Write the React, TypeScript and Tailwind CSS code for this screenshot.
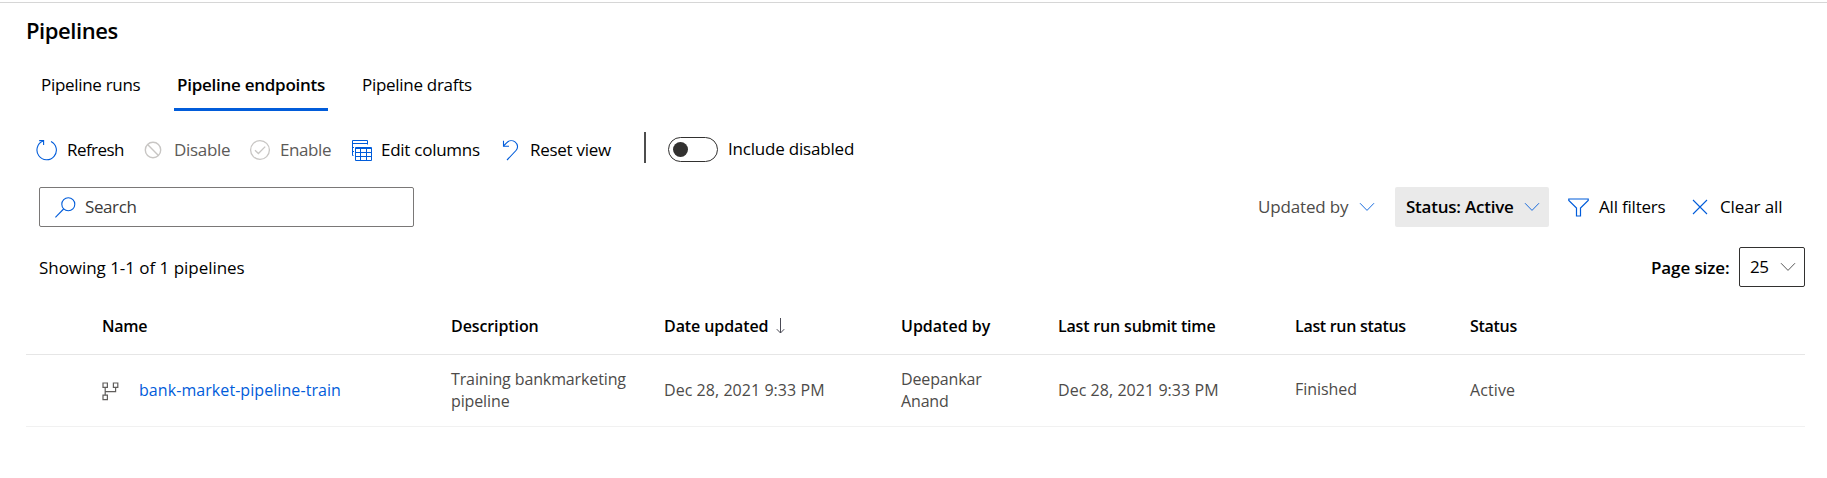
import React from "react";

type IconProps = { className?: string };

const RefreshIcon = ({ className = "" }: IconProps) => (
  <svg className={`shrink-0 ${className}`} width="22" height="22" viewBox="0 0 22 22" fill="none" stroke="#015cda" strokeWidth="1.1">
    <path d="M15 2.4A9.7 9.7 0 1 1 7 2.1" />
    <path d="M3.2 1.6H7.6V6" />
  </svg>
);

const BlockIcon = ({ className = "" }: IconProps) => (
  <svg className={`shrink-0 ${className}`} width="18" height="18" viewBox="0 0 18 18" fill="none" stroke="#c8c6c4" strokeWidth="1.4">
    <circle cx="9" cy="9" r="7.7" />
    <path d="M3.6 3.6 14.4 14.4" />
  </svg>
);

const CheckCircleIcon = ({ className = "" }: IconProps) => (
  <svg className={`shrink-0 ${className}`} width="22" height="22" viewBox="0 0 22 22" fill="none" stroke="#c8c6c4" strokeWidth="1.3">
    <circle cx="11" cy="11" r="9.4" />
    <path d="M6 11.2 9.4 14.5 16.2 7.6" />
  </svg>
);

const ColumnsIcon = ({ className = "" }: IconProps) => (
  <svg className={`shrink-0 ${className}`} width="21" height="21" viewBox="0 0 21 21" fill="none" stroke="#015cda" strokeWidth="1">
    <path d="M2.5 15.5H1.5V.5H16.5V4.5M1.5 3.5H16.5M1.5 7.5H3M1.5 11.5H3" />
    <path d="M4.5 7.5H20.5V20.5H4.5ZM4.5 8.5H20.5M4.5 12.5H20.5M4.5 16.5H20.5M9.5 8V20.5M15.5 8V20.5" />
  </svg>
);

const UndoIcon = ({ className = "" }: IconProps) => (
  <svg className={`shrink-0 ${className}`} width="17" height="21" viewBox="0 0 17 21" fill="none" stroke="#015cda" strokeWidth="1.1">
    <path d="M1.5 .8V6.2H7" />
    <path d="M1.5 6 4.6 2.8C7 .3 10.6 .1 13 1.9C16 4.2 16.3 8 14 10.5L5 20" />
  </svg>
);

const SearchIcon = ({ className = "" }: IconProps) => (
  <svg className={`shrink-0 ${className}`} width="21" height="21" viewBox="0 0 21 21" fill="none" stroke="#015cda" strokeWidth="1.1">
    <circle cx="13.3" cy="7.3" r="6.5" />
    <path d="M8.6 12 .4 20.3" />
  </svg>
);

const ChevronIcon = ({ className = "" }: IconProps) => (
  <svg className={`shrink-0 ${className}`} width="16" height="10" viewBox="0 0 16 10" fill="none" stroke="currentColor" strokeWidth="0.9">
    <path d="M1 1.2 8 8.4 15 1.2" />
  </svg>
);

const FunnelIcon = ({ className = "" }: IconProps) => (
  <svg className={`shrink-0 ${className}`} width="21" height="19" viewBox="0 0 21 19" fill="none" stroke="#015cda" strokeWidth="1.2">
    <path d="M.8 1H20.2V2.4L12.5 10V18H8.5V10L.8 2.4Z" />
  </svg>
);

const CloseIcon = ({ className = "" }: IconProps) => (
  <svg className={`shrink-0 ${className}`} width="16" height="16" viewBox="0 0 16 16" fill="none" stroke="#015cda" strokeWidth="1.1">
    <path d="M1 1 15 15M15 1 1 15" />
  </svg>
);

const SortDownIcon = ({ className = "" }: IconProps) => (
  <svg className={`shrink-0 ${className}`} width="10" height="16" viewBox="0 0 10 16" fill="none" stroke="#4a4a55" strokeWidth="1">
    <path d="M4.5 0V15M.8 11.2 4.5 15 8.2 11.2" />
  </svg>
);

const PipelineIcon = ({ className = "" }: IconProps) => (
  <svg className={`shrink-0 ${className}`} width="17" height="19" viewBox="0 0 17 19" fill="none" stroke="#605e5c" strokeWidth="1.2">
    <path d="M1 1H5.4V5.4H1ZM11.4 1H15.8V5.4H11.4ZM1 13.2H5.4V17.6H1Z" />
    <path d="M3.2 5.4V13.2M13.6 5.4V9.6H3.2" />
  </svg>
);

const columns = "grid grid-cols-[350px_213px_237px_157px_237px_175px_1fr] pl-[75px]";

export default function App() {
  return (
    <div className="h-[478px] w-full overflow-hidden bg-white pt-[2px] font-['Open_Sans','Noto_Sans',sans-serif] text-[17px] leading-6 whitespace-nowrap text-black">
      <div className="h-px bg-[#d6d6d6]" />

      <h1 className="mt-[12px] ml-[26px] text-[22px] leading-[30px] font-semibold tracking-[-0.42px]">Pipelines</h1>

      <div className="ml-[41px] flex h-[66px] items-end">
        <div className="mr-[33px] h-[38px] w-[100px] tracking-[-0.31px]">Pipeline runs</div>
        <div className="mr-[34px] h-[38px] w-[154px] border-b-[3px] border-[#015cda] pl-[3px] font-semibold tracking-[-0.26px]">Pipeline endpoints</div>
        <div className="h-[38px] w-[112px] tracking-[-0.29px]">Pipeline drafts</div>
      </div>

      <div className="ml-[36px] flex h-[76px] items-center pt-[2px]">
        <div className="flex w-[108px] items-center">
          <RefreshIcon className="mb-[1px]" />
          <span className="ml-[9px] tracking-[-0.56px]">Refresh</span>
        </div>
        <div className="flex w-[105px] items-center text-[#5c5a58]">
          <BlockIcon />
          <span className="ml-[12px] tracking-[-0.31px]">Disable</span>
        </div>
        <div className="flex w-[102px] items-center text-[#5c5a58]">
          <CheckCircleIcon />
          <span className="ml-[9px] tracking-[-0.4px]">Enable</span>
        </div>
        <div className="flex w-[151px] items-center">
          <ColumnsIcon />
          <span className="ml-[9px] tracking-[-0.26px]">Edit columns</span>
        </div>
        <div className="flex w-[142px] items-center">
          <UndoIcon />
          <span className="ml-[11px] tracking-[-0.28px]">Reset view</span>
        </div>
        <div className="mb-[5px] h-[31px] w-[2px] bg-[#4d4d4d]" />
        <div className="mb-px ml-[22px] flex h-[25px] w-[50px] items-center rounded-full border border-[#323130] pl-[4px]">
          <div className="h-[15px] w-[15px] rounded-full bg-[#323130]" />
        </div>
        <span className="mb-[2px] ml-[10px] tracking-[-0.2px]">Include disabled</span>
      </div>

      <div className="mr-[22px] ml-[39px] flex h-10 items-center justify-between">
        <div className="flex h-10 w-[375px] items-center rounded-[2px] border border-[#7a7877] pl-[15px] text-[#3b3a39]">
          <SearchIcon />
          <span className="ml-[9px] tracking-[-0.4px]">Search</span>
        </div>
        <div className="flex h-10 w-[547px] items-center">
          <div className="flex w-[137px] items-center text-[#4d4b49]">
            <span className="w-[101px] tracking-[-0.16px]">Updated by</span>
            <ChevronIcon className="text-[#015cda]" />
          </div>
          <div className="flex h-10 w-[154px] items-center rounded-[2px] bg-[#eaeaea] pl-[11px]">
            <span className="w-[118px] font-semibold tracking-[-0.23px]">Status: Active</span>
            <ChevronIcon className="text-[#015cda]" />
          </div>
          <FunnelIcon className="ml-[19px]" />
          <span className="ml-[10px] w-[93px] tracking-[-0.2px]">All filters</span>
          <CloseIcon />
          <span className="ml-[12px] tracking-[-0.1px]">Clear all</span>
        </div>
      </div>

      <div className="mt-5 mr-[22px] ml-[39px] flex h-10 items-center justify-between">
        <span className="mt-[2px] tracking-[-0.04px]">Showing 1-1 of 1 pipelines</span>
        <div className="flex items-center">
          <span className="mt-[2px] w-[88px] font-semibold tracking-[-0.1px]">Page size:</span>
          <div className="flex h-10 w-[66px] items-center rounded-[2px] border border-[#323130] pl-[10px]">
            <span className="w-[30px] tracking-[-0.5px]">25</span>
            <ChevronIcon className="text-[#444]" />
          </div>
        </div>
      </div>

      <div className="mr-[22px] ml-[26px]">
        <div className={`${columns} h-[68px] items-center border-b border-[#e6e6e6] pt-[11px] text-[16px] font-semibold`}>
          <span className="pl-px tracking-[-0.3px]">Name</span>
          <span className="tracking-[-0.1px]">Description</span>
          <span className="flex items-center">
            <span className="w-[112px] tracking-[-0.1px]">Date updated</span>
            <SortDownIcon />
          </span>
          <span className="tracking-[0px]">Updated by</span>
          <span className="tracking-[-0.18px]">Last run submit time</span>
          <span className="tracking-[-0.3px]">Last run status</span>
          <span className="tracking-[-0.3px]">Status</span>
        </div>
        <div className={`${columns} h-[72px] items-center border-b border-[#f1f1f1] pb-[2px] text-[16px] leading-[22px] text-[#4d4b49]`}>
          <span className="flex items-center pl-px">
            <PipelineIcon className="mt-[3px] mr-[20px]" />
            <span className="tracking-[0.07px] text-[#015cda]">bank-market-pipeline-train</span>
          </span>
          <span className="tracking-[-0.12px]">
            Training bankmarketing
            <br />
            pipeline
          </span>
          <span className="tracking-[0.05px]">Dec 28, 2021 9:33 PM</span>
          <span className="tracking-[-0.15px]">
            Deepankar
            <br />
            Anand
          </span>
          <span className="tracking-[0.05px]">Dec 28, 2021 9:33 PM</span>
          <span className="mb-[2px] tracking-[-0.05px]">Finished</span>
          <span className="tracking-[0.1px]">Active</span>
        </div>
      </div>
    </div>
  );
}
